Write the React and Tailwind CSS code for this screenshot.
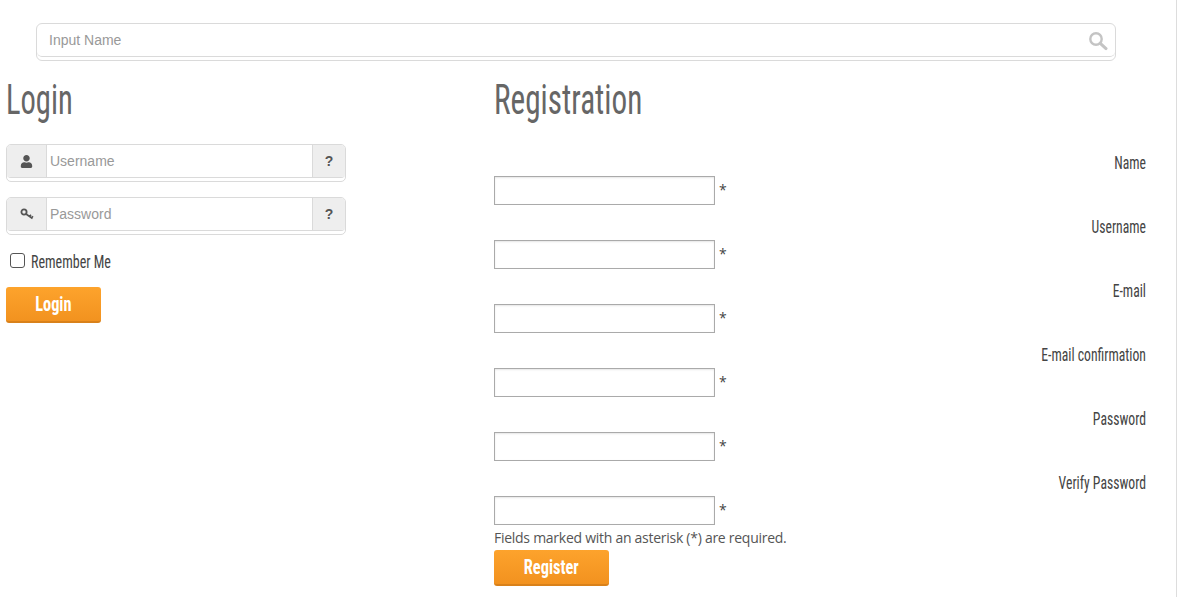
import React from "react";
import { FaUser } from "react-icons/fa";

const narrow = "font-['Roboto_Condensed','Liberation_Sans_Narrow','Liberation_Sans',sans-serif]";

const regFields = ["Name", "Username", "E-mail", "E-mail confirmation", "Password", "Verify Password"];

function SearchIcon() {
  return (
    <svg width="20" height="20" viewBox="0 0 20 20" fill="none" stroke="#c4c4c4" className="absolute right-[7px] top-[7px]">
      <circle cx="8" cy="8" r="5.7" strokeWidth="2.4" />
      <path d="M12.3 12.3L18 17.6" strokeWidth="3" strokeLinecap="round" />
    </svg>
  );
}

function KeyIcon() {
  return (
    <svg width="14" height="12" viewBox="0 0 14 12" fill="none" stroke="#555555">
      <circle cx="4" cy="4" r="2.6" strokeWidth="1.8" />
      <path d="M6 6L12.5 10.5M9.5 8.5L11 6.8M11.5 9.8L13 8.2" strokeWidth="1.6" />
    </svg>
  );
}

function LoginInput({ icon, placeholder }) {
  return (
    <div className="h-[38px] w-[340px] rounded-[5px] border border-[#dadada] mb-[15px]">
      <div className="flex h-[33px] rounded-[4px] border-b border-[#dadada] overflow-hidden">
        <div className="w-[40px] flex items-center justify-center bg-[#eeeeee] border-r border-[#dadada] text-[#555555]">
          {icon}
        </div>
        <input
          placeholder={placeholder}
          className="flex-1 min-w-0 px-[3px] text-[14px] font-['Liberation_Sans',sans-serif] outline-none placeholder:text-[#999999]"
        />
        <div className="w-[33px] flex items-center justify-center bg-[#eeeeee] border-l border-[#dadada] text-[14px] font-bold text-[#555555] font-['Liberation_Sans',sans-serif]">
          ?
        </div>
      </div>
    </div>
  );
}

function OrangeButton({ label, className }) {
  return (
    <button className={`h-[36px] pt-[1px] rounded-[3px] border-b-2 border-[#d9811a] bg-gradient-to-b from-[#fda32c] to-[#f2921f] text-white text-[21px] font-bold ${narrow} ${className}`}>
      <span className="inline-block scale-x-[0.78]">{label}</span>
    </button>
  );
}

export default function App() {
  return (
    <div className="w-[1177px] h-[597px] overflow-hidden bg-white border-r border-[#dddddd] text-[#555555]">
      <div className="pt-[23px] pl-[36px]">
        <div className="relative h-[38px] w-[1080px] rounded-[6px] border border-[#dadada]">
          <div className="h-[33px] rounded-[5px] border-b border-[#dadada]">
            <input
              placeholder="Input Name"
              className="w-full h-full px-[12px] text-[14px] font-['Liberation_Sans',sans-serif] outline-none placeholder:text-[#999999]"
            />
          </div>
          <SearchIcon />
        </div>
      </div>

      <div className="flex pl-[6px] pr-[30px] pt-[14px]">
        <div className="w-[340px] shrink-0">
          <h1 className={`text-[43px] leading-[48px] font-normal text-[#666666] scale-x-[0.71] origin-left ${narrow}`}>Login</h1>
          <div className="mt-[21px]">
            <LoginInput icon={<FaUser size={13} />} placeholder="Username" />
            <LoginInput icon={<KeyIcon />} placeholder="Password" />
          </div>
          <label className={`flex items-start gap-[6px] pl-[4px] text-[18px] leading-[24px] text-[#444444] ${narrow}`}>
            <input type="checkbox" className="appearance-none mt-[3px] w-[15px] h-[15px] rounded-[3px] border border-[#555555] bg-white" />
            <span className="scale-x-[0.78] origin-left">Remember Me</span>
          </label>
          <OrangeButton label="Login" className="w-[95px] mt-[13px]" />
        </div>

        <div className="flex-1 ml-[148px]">
          <h1 className={`text-[43px] leading-[48px] font-normal text-[#666666] scale-x-[0.726] origin-left ${narrow}`}>Registration</h1>
          <div className="mt-[27px]">
            {regFields.map((field) => (
              <div key={field} className="h-[64px]">
                <div className={`pt-[1px] h-[24px] text-right text-[18px] leading-[24px] text-[#444444] scale-x-[0.76] origin-right ${narrow}`}>{field}</div>
                <div className="mt-[2px] flex items-start">
                  <input className="w-[221px] h-[29px] border border-[#aaaaaa] shadow-[inset_0_1px_2px_rgba(0,0,0,0.1)] outline-none" />
                  <span className="ml-[4px] mt-[4px] text-[14px] leading-[20px] text-[#444444] font-['Open_Sans',sans-serif]">*</span>
                </div>
              </div>
            ))}
          </div>
          <p className="-mt-[6px] text-[14px] tracking-[-0.27px] leading-[20px] text-[#555555] font-['Open_Sans',sans-serif]">
            Fields marked with an asterisk (*) are required.
          </p>
          <OrangeButton label="Register" className="w-[115px] mt-[2px]" />
        </div>
      </div>
    </div>
  );
}
